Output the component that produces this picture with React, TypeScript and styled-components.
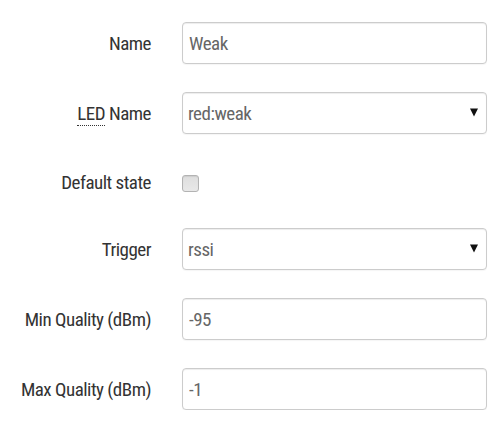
import React from "react";
import styled, { createGlobalStyle } from "styled-components";

const Global = createGlobalStyle`
  html, body { margin: 0; padding: 0; background: #fff; }
  body { font-family: "Roboto Condensed", Roboto, "Liberation Sans", sans-serif; }
`;

const Form = styled.div`
  display: flex;
  flex-direction: column;
  gap: 28px;
  padding-top: 22px;
  width: 503px;
`;

const Row = styled.div<{ $h?: number }>`
  display: grid;
  grid-template-columns: 151px 305px;
  column-gap: 31px;
  align-items: center;
  height: ${(p) => p.$h ?? 42}px;
`;

const Label = styled.label`
  text-align: right;
  font-size: 19px;
  color: #333;
  letter-spacing: -0.5px;
  white-space: nowrap;
`;

const Abbr = styled.span`
  border-bottom: 1px dotted #333;
`;

const TextInput = styled.input`
  box-sizing: border-box;
  width: 305px;
  height: 42px;
  padding: 0 6px;
  border: 1px solid #ccc;
  border-radius: 4px;
  box-shadow: inset 0 1px 1px rgba(0, 0, 0, 0.075), 0 1px 1px rgba(0, 0, 0, 0.04);
  font-family: inherit;
  font-size: 19px;
  letter-spacing: -0.5px;
  color: #666;
  background: #fff;
  outline: none;
`;

const SelectWrap = styled.div`
  position: relative;
  width: 305px;
  height: 42px;
`;

const Select = styled.select`
  box-sizing: border-box;
  width: 305px;
  height: 42px;
  padding: 0 6px 0 5px;
  border: 1px solid #ccc;
  border-radius: 4px;
  box-shadow: inset 0 1px 1px rgba(0, 0, 0, 0.075), 0 1px 1px rgba(0, 0, 0, 0.04);
  font-family: inherit;
  font-size: 19px;
  letter-spacing: -0.5px;
  color: #666;
  background: #fff;
  appearance: none;
  -webkit-appearance: none;
  outline: none;
`;

const Arrow = styled.svg`
  position: absolute;
  right: 9px;
  top: 16px;
  width: 8px;
  height: 9px;
  pointer-events: none;
`;

const CheckCell = styled.div`
  display: flex;
  align-items: center;
  padding-top: 5px;
`;

const Check = styled.span`
  display: inline-block;
  box-sizing: border-box;
  width: 17px;
  height: 17px;
  border: 1px solid #b3b3b3;
  border-radius: 3px;
  background: linear-gradient(#dedede, #e8e8e8);
  box-shadow: inset 0 1px 1px rgba(0, 0, 0, 0.08);
`;

const LabelCell = styled.div<{ $pt?: number }>`
  display: flex;
  justify-content: flex-end;
  padding-top: ${(p) => p.$pt ?? 0}px;
`;

function SelectField({ value }: { value: string }) {
  return (
    <SelectWrap>
      <Select defaultValue={value}>
        <option value={value}>{value}</option>
      </Select>
      <Arrow viewBox="0 0 8 9">
        <path d="M0 0.5 H8 L4 8.5 Z" fill="#111" />
      </Arrow>
    </SelectWrap>
  );
}

export default function App() {
  return (
    <>
      <Global />
      <Form>
        <Row>
          <Label>Name</Label>
          <TextInput defaultValue="Weak" />
        </Row>
        <Row>
          <Label>
            <Abbr>LED</Abbr> Name
          </Label>
          <SelectField value="red:weak" />
        </Row>
        <Row $h={38}>
          <LabelCell $pt={3}>
            <Label>Default state</Label>
          </LabelCell>
          <CheckCell>
            <Check />
          </CheckCell>
        </Row>
        <Row>
          <Label>Trigger</Label>
          <SelectField value="rssi" />
        </Row>
        <Row>
          <Label>Min Quality (dBm)</Label>
          <TextInput defaultValue="-95" />
        </Row>
        <Row>
          <Label>Max Quality (dBm)</Label>
          <TextInput defaultValue="-1" />
        </Row>
      </Form>
    </>
  );
}
